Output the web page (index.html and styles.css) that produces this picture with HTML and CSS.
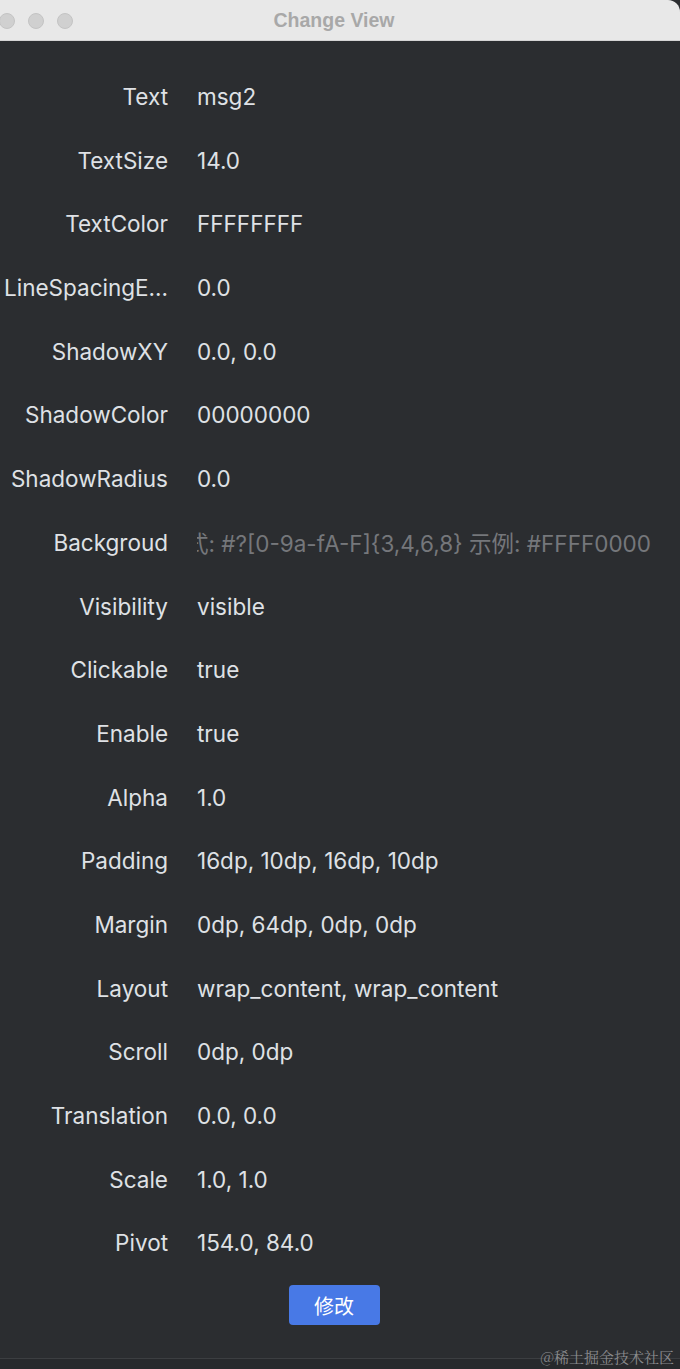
FILE: index.html
```html
<!DOCTYPE html>
<html>
<head>
<meta charset="utf-8">
<link rel="stylesheet" href="styles.css">
</head>
<body>
<div class="window">
  <div class="titlebar">
    <div class="lights"><span class="light"></span><span class="light"></span><span class="light"></span></div>
    <div class="title">Change View</div>
  </div>
  <div class="content">
    <div class="rows">
      <div class="row"><div class="label">Text</div><div class="value">msg2</div></div>
      <div class="row"><div class="label">TextSize</div><div class="value">14.0</div></div>
      <div class="row"><div class="label">TextColor</div><div class="value">FFFFFFFF</div></div>
      <div class="row"><div class="label">LineSpacingE...</div><div class="value">0.0</div></div>
      <div class="row"><div class="label">ShadowXY</div><div class="value">0.0, 0.0</div></div>
      <div class="row"><div class="label">ShadowColor</div><div class="value">00000000</div></div>
      <div class="row"><div class="label">ShadowRadius</div><div class="value">0.0</div></div>
      <div class="row"><div class="label">Backgroud</div><div class="value placeholder"><span>格式: #?[0-9a-fA-F]{3,4,6,8} 示例: #FFFF0000</span></div></div>
      <div class="row"><div class="label">Visibility</div><div class="value">visible</div></div>
      <div class="row"><div class="label">Clickable</div><div class="value">true</div></div>
      <div class="row"><div class="label">Enable</div><div class="value">true</div></div>
      <div class="row"><div class="label">Alpha</div><div class="value">1.0</div></div>
      <div class="row"><div class="label">Padding</div><div class="value">16dp, 10dp, 16dp, 10dp</div></div>
      <div class="row"><div class="label">Margin</div><div class="value">0dp, 64dp, 0dp, 0dp</div></div>
      <div class="row"><div class="label">Layout</div><div class="value">wrap_content, wrap_content</div></div>
      <div class="row"><div class="label">Scroll</div><div class="value">0dp, 0dp</div></div>
      <div class="row"><div class="label">Translation</div><div class="value">0.0, 0.0</div></div>
      <div class="row"><div class="label">Scale</div><div class="value">1.0, 1.0</div></div>
      <div class="row"><div class="label">Pivot</div><div class="value">154.0, 84.0</div></div>
    </div>
    <div class="actions"><button class="btn">修改</button></div>
  </div>
  <div class="footer"><span class="watermark">@稀土掘金技术社区</span></div>
</div>
</body>
</html>
```
FILE: styles.css
```css
html, body {
  margin: 0;
  padding: 0;
  background: #2b2d30;
}
body {
  width: 680px;
  height: 1369px;
  overflow: hidden;
  font-family: Inter, "Noto Sans CJK SC", sans-serif;
}
.window {
  display: flex;
  flex-direction: column;
  height: 1369px;
}
.titlebar {
  position: relative;
  height: 41px;
  background: #e8e8e8;
  border-top-right-radius: 12px;
  border-bottom: 1px solid #d4d4d4;
  box-sizing: border-box;
  display: flex;
  align-items: center;
  justify-content: center;
}
.lights {
  position: absolute;
  left: -1px;
  top: 13px;
  display: flex;
  gap: 13px;
}
.light {
  width: 16px;
  height: 16px;
  border-radius: 50%;
  background: #d0d0d0;
  border: 1px solid #c4c4c4;
  box-sizing: border-box;
}
.title {
  font-family: "Liberation Sans", Arial, sans-serif;
  font-weight: bold;
  font-size: 19.5px;
  color: #a8a8a8;
  margin-left: -12px;
}
.content {
  flex: 1;
  display: flex;
  flex-direction: column;
  padding-top: 43px;
}
.rows {
  display: flex;
  flex-direction: column;
  gap: 38.7px;
}
.row {
  display: flex;
  align-items: center;
  height: 25px;
  font-size: 22.5px;
  color: #dfe1e5;
}
.label {
  width: 168px;
  text-align: right;
  white-space: nowrap;
  flex: none;
}
.value {
  margin-left: 29px;
  white-space: nowrap;
}
.placeholder {
  width: 454px;
  overflow: hidden;
  display: flex;
  justify-content: flex-end;
  color: #75777b;
}
.placeholder span { flex: none; }
.actions {
  display: flex;
  justify-content: center;
  margin-top: 30px;
  padding-right: 12px;
}
.btn {
  width: 91px;
  height: 40px;
  border: none;
  border-radius: 4px;
  background: #4879e6;
  color: #ffffff;
  font-family: "Noto Sans CJK SC", sans-serif;
  font-size: 20px;
  cursor: pointer;
}
.footer {
  height: 10px;
  border-top: 1px solid #3c3e41;
  background: #27292c;
  position: relative;
}
.watermark {
  position: absolute;
  right: 6px;
  bottom: 2px;
  font-family: "Noto Serif CJK SC", "Noto Sans CJK SC", serif;
  font-size: 15px;
  color: #8a8b8e;
  white-space: nowrap;
}
```
